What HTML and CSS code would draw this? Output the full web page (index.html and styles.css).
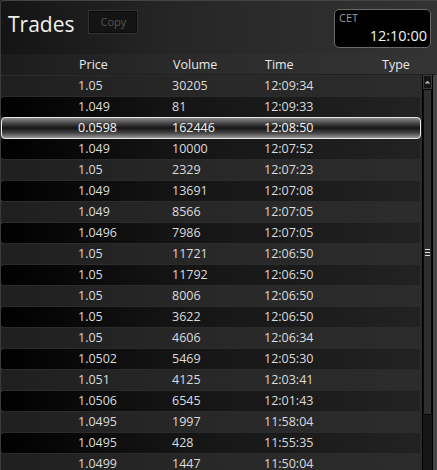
FILE: index.html
```html
<!DOCTYPE html>
<html>
<head>
<meta charset="utf-8">
<link rel="stylesheet" href="styles.css">
</head>
<body>
<div class="panel">
  <div class="top">
    <div class="title">Trades</div>
    <div class="copy">Copy</div>
    <div class="spacer"></div>
    <div class="clock">
      <div class="tz">CET</div>
      <div class="time">12:10:00</div>
    </div>
  </div>
  <div class="colhead">
    <div>Price</div><div>Volume</div><div>Time</div><div>Type</div>
  </div>
  <div class="body">
    <div class="rows">
      <div class="row light"><div>1.05</div><div>30205</div><div>12:09:34</div><div></div></div>
      <div class="row dark"><div>1.049</div><div>81</div><div>12:09:33</div><div></div></div>
      <div class="row sel"><div>0.0598</div><div>162446</div><div>12:08:50</div><div></div></div>
      <div class="row dark"><div>1.049</div><div>10000</div><div>12:07:52</div><div></div></div>
      <div class="row light"><div>1.05</div><div>2329</div><div>12:07:23</div><div></div></div>
      <div class="row dark"><div>1.049</div><div>13691</div><div>12:07:08</div><div></div></div>
      <div class="row light"><div>1.049</div><div>8566</div><div>12:07:05</div><div></div></div>
      <div class="row dark"><div>1.0496</div><div>7986</div><div>12:07:05</div><div></div></div>
      <div class="row light"><div>1.05</div><div>11721</div><div>12:06:50</div><div></div></div>
      <div class="row dark"><div>1.05</div><div>11792</div><div>12:06:50</div><div></div></div>
      <div class="row light"><div>1.05</div><div>8006</div><div>12:06:50</div><div></div></div>
      <div class="row dark"><div>1.05</div><div>3622</div><div>12:06:50</div><div></div></div>
      <div class="row light"><div>1.05</div><div>4606</div><div>12:06:34</div><div></div></div>
      <div class="row dark"><div>1.0502</div><div>5469</div><div>12:05:30</div><div></div></div>
      <div class="row light"><div>1.051</div><div>4125</div><div>12:03:41</div><div></div></div>
      <div class="row dark"><div>1.0506</div><div>6545</div><div>12:01:43</div><div></div></div>
      <div class="row light"><div>1.0495</div><div>1997</div><div>11:58:04</div><div></div></div>
      <div class="row dark"><div>1.0495</div><div>428</div><div>11:55:35</div><div></div></div>
      <div class="row light"><div>1.0499</div><div>1447</div><div>11:50:04</div><div></div></div>
    </div>
    <div class="scrollbar">
      <div class="up"><svg width="9" height="6" viewBox="0 0 9 6"><path d="M1 5 L4.5 1.5 L8 5 Z" fill="#bbb"/></svg></div>
      <div class="thumb"><div class="grip"><span></span><span></span><span></span></div></div>
      <div class="track"></div>
    </div>
  </div>
</div>
</body>
</html>
```
FILE: styles.css
```css
* { box-sizing: border-box; }
html, body { margin: 0; padding: 0; background: #2a2a2a; }
body { width: 437px; height: 470px; overflow: hidden; font-family: "Open Sans", "Noto Sans", sans-serif; }
.panel {
  width: 437px; height: 470px;
  background: #2b2b2b;
  border-top: 1px solid #444;
  border-left: 1px solid #3a3a3a;
  border-top-left-radius: 4px;
  display: flex; flex-direction: column;
  overflow: hidden;
}
.top {
  height: 53px;
  display: flex; align-items: flex-start;
  background: linear-gradient(to right, #141414 0%, #262626 40%, #333 100%);
  padding: 8px 6px 0 7px;
}
.title { font-size: 21px; color: #f0f0f0; line-height: 30px; letter-spacing: 0; }
.copy {
  margin-left: 14px; margin-top: 1px;
  width: 50px; height: 24px;
  background: #141414;
  border: 1px solid #333;
  box-shadow: inset 0 0 0 1px #0a0a0a;
  color: #555; font-size: 11px; text-align: center; line-height: 21px;
}
.spacer { flex: 1; }
.clock {
  width: 97px; height: 39px; margin-top: 0px;
  background: #000; border: 1px solid #6a6a6a; border-radius: 5px;
  padding: 1px 3px 0 4px;
  display: flex; flex-direction: column;
}
.tz { font-size: 11px; color: #999; line-height: 13px; }
.time { font-size: 14.5px; color: #f2f2f2; text-align: right; line-height: 20px; margin-top: 2px; }
.colhead {
  height: 21px;
  display: grid; grid-template-columns: 94px 92px 117px 1fr;
  padding-left: 78px;
  background: linear-gradient(to right, #1c1c1c 0%, #2a2a2a 40%, #343434 100%);
  border-bottom: 1px solid #202020;
  color: #e8e8e8; font-size: 12.5px; line-height: 21px;
}
.body { flex: 1; display: flex; min-height: 0; }
.rows { flex: 1; padding-top: 1px; overflow: hidden; }
.row {
  height: 20px; margin-bottom: 1px;
  display: grid; grid-template-columns: 94px 92px 117px 1fr;
  padding-left: 77px;
  color: #dcdcdc; font-size: 12.5px; line-height: 20px;
  border-radius: 3px 0 0 3px;
  margin-right: 2px;
}
.row.light { background: linear-gradient(to right, #1f1f1f 0%, #282828 50%, #2c2c2c 100%); }
.row.dark { background: linear-gradient(to right, #000 0%, #141414 40%, #222 100%); }
.row.sel {
  height: 22px; margin-top: -1px; margin-bottom: 0;
  border: 1px solid #e8e8e8; border-radius: 4px;
  padding-left: 76px; line-height: 20px;
  color: #f4f4f4;
  background: linear-gradient(to bottom, #8a8a8a 0%, #4a4a4a 25%, #151515 50%, #444 75%, #9a9a9a 100%);
  margin-right: 1px;
}
.scrollbar {
  width: 15px; display: flex; flex-direction: column;
  background: #000;
  border-right: 4px solid #454545;
  padding: 0 1px 0 1px;
}
.up {
  height: 14px; background: #151515; border: 1px solid #3a3a3a;
  display: flex; align-items: center; justify-content: center;
}
.thumb {
  height: 326px; background: #2e2e2e; border: 1px solid #0a0a0a;
  display: flex; align-items: center; justify-content: center;
}
.grip { display: flex; flex-direction: column; gap: 2px; }
.grip span { display: block; width: 5px; height: 1px; background: #ddd; }
.track { flex: 1; background: #161616; }
```
